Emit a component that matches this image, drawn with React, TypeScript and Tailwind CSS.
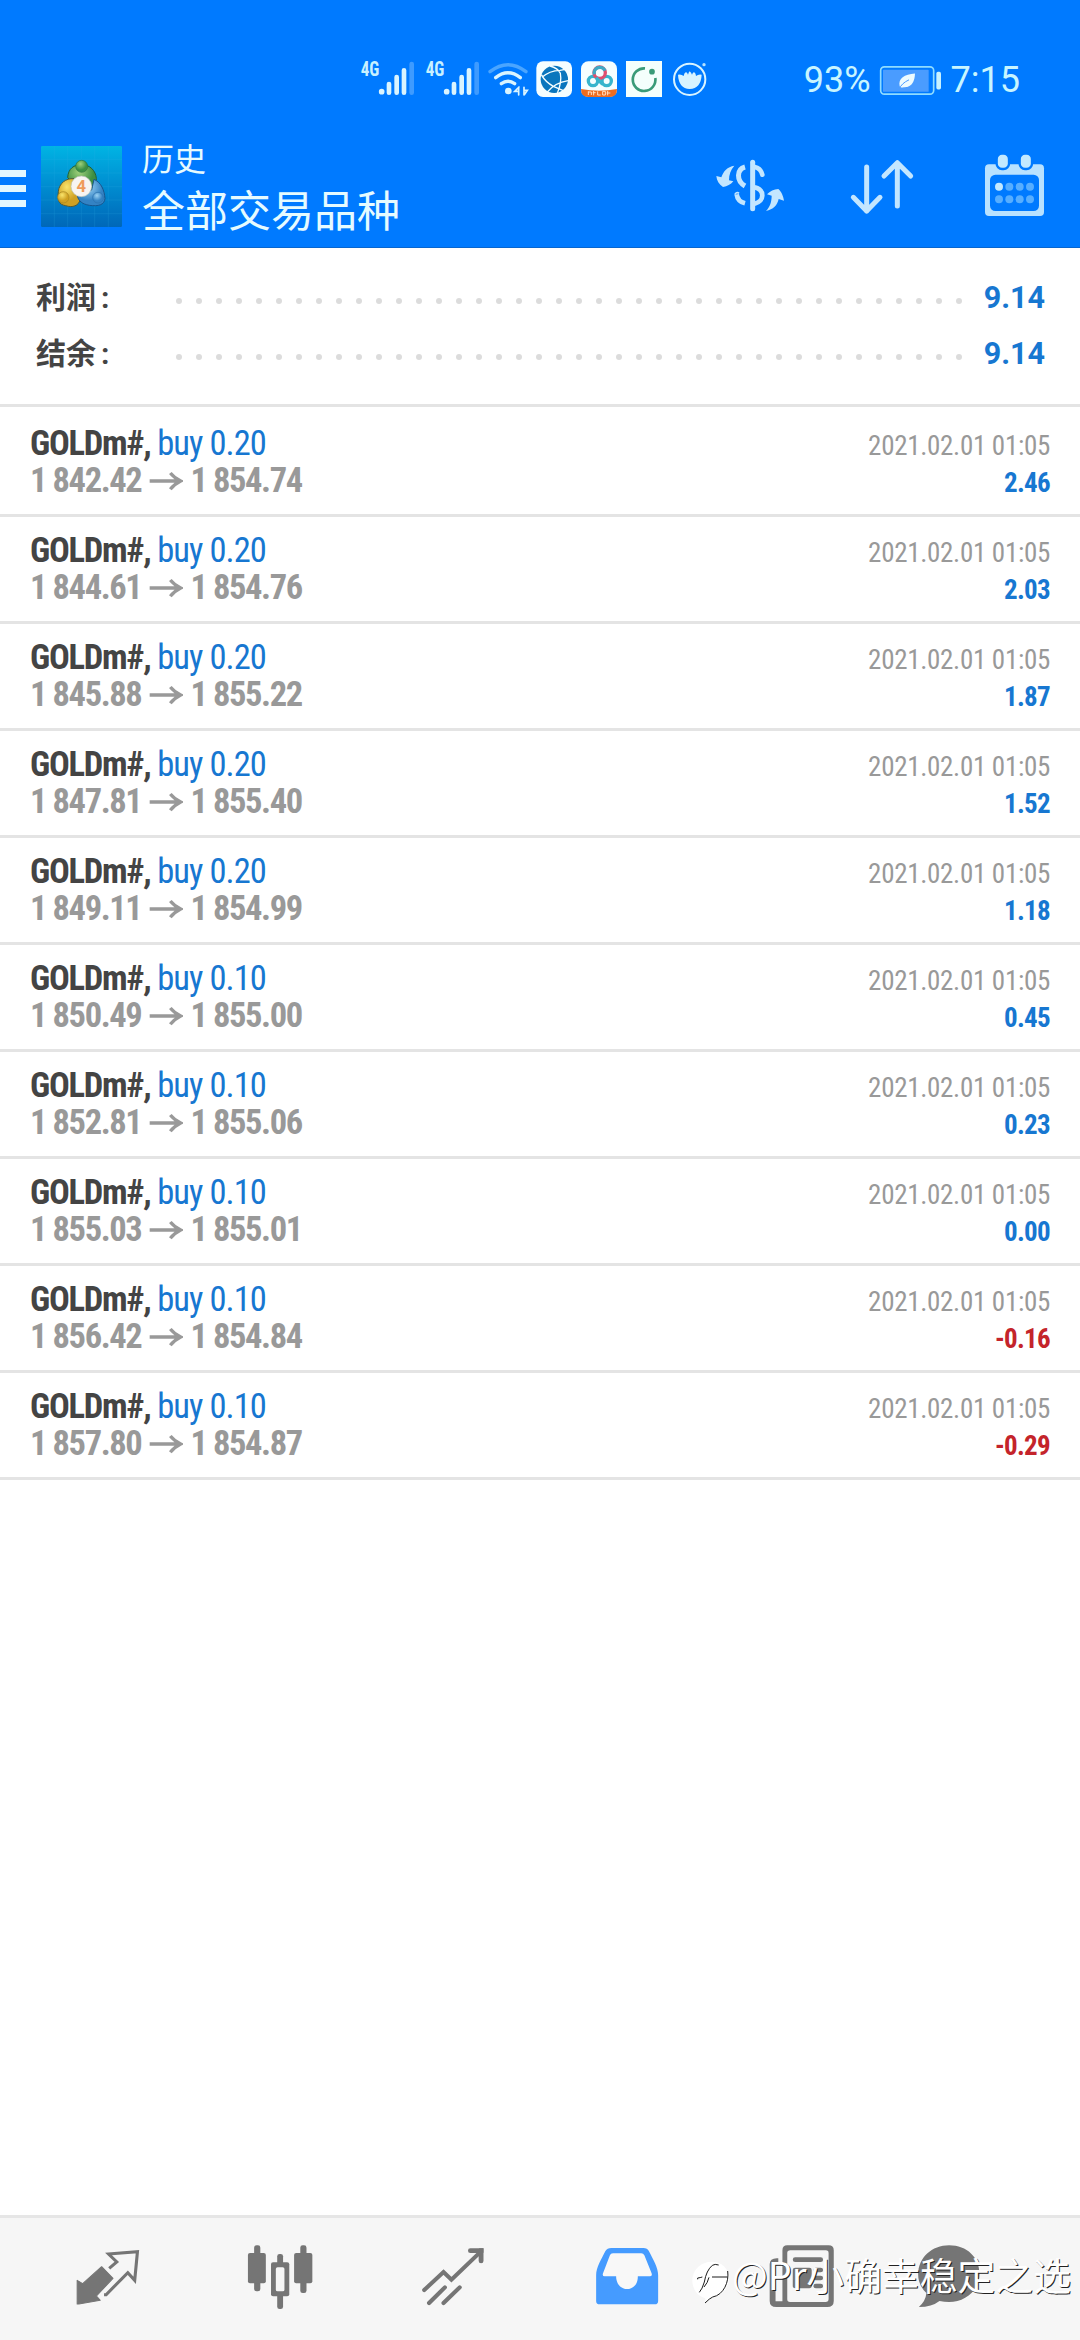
const deals = [
  { volume: '0.20', open: '1 842.42', close: '1 854.74', profit: '2.46' },
  { volume: '0.20', open: '1 844.61', close: '1 854.76', profit: '2.03' },
  { volume: '0.20', open: '1 845.88', close: '1 855.22', profit: '1.87' },
  { volume: '0.20', open: '1 847.81', close: '1 855.40', profit: '1.52' },
  { volume: '0.20', open: '1 849.11', close: '1 854.99', profit: '1.18' },
  { volume: '0.10', open: '1 850.49', close: '1 855.00', profit: '0.45' },
  { volume: '0.10', open: '1 852.81', close: '1 855.06', profit: '0.23' },
  { volume: '0.10', open: '1 855.03', close: '1 855.01', profit: '0.00' },
  { volume: '0.10', open: '1 856.42', close: '1 854.84', profit: '-0.16' },
  { volume: '0.10', open: '1 857.80', close: '1 854.87', profit: '-0.29' },
];

const summary = [
  { label: '利润', value: '9.14' },
  { label: '结余', value: '9.14' },
];

const Signal = () => (
  <svg viewBox="60 48 165 132" className="h-[44px] w-[55px]" strokeWidth="14" strokeLinecap="round">
    <text x="62" y="109" fill="#c8f1ff" fontSize="60" fontWeight="700" textLength="56" lengthAdjust="spacingAndGlyphs" className="font-['Roboto_Condensed',Roboto,sans-serif]">4G</text>
    <circle cx="125" cy="155" r="8.5" fill="#d9f4ff" />
    <g stroke="#d9f4ff">
      <path d="M147 132V158M170 111V158M192 91V158" />
    </g>
    <path d="M215 72V158" stroke="#3e9bff" />
  </svg>
);

const Wifi = () => (
  <svg viewBox="444 48 126 132" className="ml-2 h-[44px] w-[42px]" fill="none" strokeLinecap="round" strokeWidth="10">
    <path d="M450 95Q504 53 558 95" stroke="#4aa5ff" />
    <path d="M467 113Q504 84 541 113M484 131Q504 116 524 131" stroke="#d9f4ff" />
    <circle cx="505" cy="153" r="10" fill="#d9f4ff" />
    <path d="M536 142V165M537 141L524 154H536M552 142V165M553 164L562 151H552" stroke="#d9f4ff" strokeWidth="5" />
  </svg>
);

const Globe = () => (
  <svg viewBox="585 48 117 132" className="ml-[5px] h-[44px] w-[39px]">
    <rect x="589" y="64" width="107" height="107" rx="20" fill="#f5feff" />
    <circle cx="643" cy="118" r="41" fill="#0a76bd" />
    <path d="M606 112Q628 92 660 91L676 88M604 104Q616 126 640 139L670 152M630 78Q654 84 661 100Q666 125 652 160M622 156Q645 128 684 122" fill="none" stroke="#f5feff" strokeWidth="4" />
  </svg>
);

const Cloud = () => (
  <svg viewBox="720 48 117 132" className="ml-1.5 h-[44px] w-[39px]">
    <rect x="723" y="64" width="108" height="107" rx="22" fill="#f5feff" />
    <g fill="none" strokeWidth="10">
      <circle cx="759" cy="123" r="14" stroke="#37b4cc" />
      <circle cx="800" cy="123" r="14" stroke="#37b4cc" />
      <circle cx="779" cy="98" r="17" stroke="#e0506f" />
      <path d="M763 103A17 17 0 0 1 795 92" stroke="#3fa9c4" />
      <path d="M768 113L788 133" stroke="#37b4cc" />
    </g>
    <path d="M723 147Q777 158 831 147Q831 171 809 171H745Q723 171 723 147Z" fill="#ee6c1f" />
    <path d="M745 154V165M745 156H754V165M761 153V166M758 158H767M773 154V165H782M788 154H796V165H788ZM803 153V166M800 159H811" stroke="#ffe0c4" strokeWidth="3" fill="none" />
  </svg>
);

const Ring = () => (
  <svg viewBox="855 48 117 132" className="ml-1.5 h-[44px] w-[39px]">
    <rect x="858" y="63" width="108" height="108" fill="#f4fffc" />
    <path d="M915 85A34 34 0 1 0 946 114" fill="none" stroke="#3a9b78" strokeWidth="8" />
    <circle cx="936" cy="95" r="8.5" fill="#3a9b78" />
  </svg>
);

const Lotus = () => (
  <svg viewBox="993 48 114 132" className="ml-[7px] h-[44px] w-[38px]">
    <circle cx="1049" cy="118" r="47" fill="none" stroke="#d9f4ff" strokeWidth="6" />
    <circle cx="1092" cy="74" r="5" fill="#b5e2ff" />
    <path d="M1014 104Q1024 102 1031 108Q1032 99 1038 96Q1043 100 1044 104Q1046 97 1049 94Q1054 98 1056 104Q1057 99 1062 96Q1068 101 1068 108Q1075 102 1085 104Q1083 145 1049 147Q1016 145 1014 104Z" fill="#d9f4ff" />
  </svg>
);

const Battery = () => (
  <svg viewBox="296 60 192 116" className="h-[39px] w-[64px]">
    <rect x="301" y="77" width="159" height="82" rx="11" fill="none" stroke="#8fdcff" strokeWidth="5" />
    <rect x="308" y="86" width="137" height="66" rx="2" fill="#4a9cff" />
    <path d="M404 97C372 99 353 112 358 135L362 139C376 138 402 142 404 97Z" fill="#edfbff" />
    <path d="M356 144Q364 126 386 116" fill="none" stroke="#4a9cff" strokeWidth="3" />
    <rect x="468" y="92" width="14" height="53" rx="5" fill="#c8f1ff" />
  </svg>
);

const AppLogo = () => (
  <svg viewBox="123 78 243 243" className="ml-[15px] h-[81px] w-[81px]">
    <defs>
      <linearGradient id="sky" x1="0" y1="0" x2="0" y2="1">
        <stop offset="0" stopColor="#00b4e4" />
        <stop offset="0.5" stopColor="#008cd0" />
        <stop offset="1" stopColor="#0067b8" />
      </linearGradient>
      <radialGradient id="green" cx="0.4" cy="0.3"><stop offset="0" stopColor="#9fd07a" /><stop offset="1" stopColor="#3d8f42" /></radialGradient>
      <radialGradient id="yellow" cx="0.4" cy="0.3"><stop offset="0" stopColor="#f9e46c" /><stop offset="1" stopColor="#cfa021" /></radialGradient>
      <radialGradient id="blue" cx="0.4" cy="0.3"><stop offset="0" stopColor="#9bd2f3" /><stop offset="1" stopColor="#3483c4" /></radialGradient>
    </defs>
    <rect x="123" y="78" width="243" height="243" rx="4" fill="url(#sky)" />
    <path d="M163 78V321M203 78V321M244 78V321M284 78V321M325 78V321M123 118H366M123 159H366M123 200H366M123 240H366M123 281H366" stroke="#33b1e6" strokeWidth="1.5" opacity="0.35" />
    <path d="M203 172C205 145 222 134 245 134C270 134 287 152 289 175C290 190 282 205 272 210L216 190Z" fill="url(#green)" stroke="#245f34" strokeWidth="3" />
    <path d="M222 176C198 174 177 190 175 215C172 240 176 254 197 257C218 264 236 257 240 240Z" fill="url(#yellow)" stroke="#4d5a3a" strokeWidth="3" />
    <path d="M282 178C304 188 313 210 315 236C313 254 296 260 268 256C246 252 236 243 232 228L275 210Z" fill="url(#blue)" stroke="#17558c" strokeWidth="3" />
    <circle cx="245" cy="139" r="18" fill="url(#green)" stroke="#2f7440" strokeWidth="2" />
    <circle cx="190" cy="232" r="17" fill="url(#yellow)" stroke="#a58420" strokeWidth="2" />
    <circle cx="294" cy="233" r="16" fill="url(#blue)" stroke="#2a71ad" strokeWidth="2" />
    <circle cx="244" cy="199" r="31" fill="#f7f4f1" stroke="#b9c4b9" strokeWidth="2" />
    <text x="244" y="217" textAnchor="middle" fontSize="50" fontWeight="700" fill="#ef9a5a" className="font-[Roboto,sans-serif]">4</text>
  </svg>
);

const CurrencyIcon = () => (
  <svg viewBox="72 66 216 204" className="h-[68px] w-[72px]" fill="none" stroke="#c3e6ff">
    <path d="M133 107C112 110 100 124 94 142L79 138C80 152 87 163 99 171C112 169 122 164 130 154L117 151C117 134 122 120 133 107Z" fill="#c3e6ff" stroke="none" />
    <path d="M228 243C250 238 262 226 266 207L282 212C280 199 274 184 265 177C252 178 240 183 231 193L245 197C245 215 240 231 228 243Z" fill="#c3e6ff" stroke="none" />
    <path d="M188 97V236" strokeWidth="15" strokeLinecap="round" />
    <path d="M165 111C140 118 138 152 165 168" strokeWidth="15" />
    <path d="M140 193C142 208 150 216 165 220" strokeWidth="14" />
    <path d="M135 194A7 7 0 0 1 147 190" strokeWidth="5" />
    <path d="M194 111C207 114 214 121 217 134" strokeWidth="14" strokeLinecap="round" />
    <path d="M194 172C225 180 224 214 194 221" strokeWidth="14" />
  </svg>
);

const SortIcon = () => (
  <svg viewBox="474 66 204 204" className="ml-[62px] h-[68px] w-[68px]" fill="none" stroke="#c3e6ff" strokeWidth="15" strokeLinecap="round" strokeLinejoin="round">
    <path d="M530 111V243M490 202L530 243L570 202M622 228V98M582 138L622 98L662 138" />
  </svg>
);

const CalendarIcon = () => (
  <svg viewBox="876 66 198 204" className="ml-[66px] h-[68px] w-[66px]">
    <rect x="885" y="103" width="177" height="155" rx="12" fill="#b9e2ff" />
    <rect x="900" y="134" width="147" height="109" rx="16" fill="#007aff" />
    <g fill="#c3e9ff" stroke="#007aff" strokeWidth="7">
      <rect x="920" y="71" width="37" height="46" rx="16" />
      <rect x="989" y="71" width="37" height="46" rx="16" />
    </g>
    <circle cx="927" cy="170" r="12" fill="#c3e9ff" />
    <g fill="#57aeff">
      <circle cx="958" cy="170" r="12" />
      <circle cx="989" cy="170" r="12" />
      <circle cx="1020" cy="170" r="12" />
      <circle cx="927" cy="208" r="12" />
      <circle cx="958" cy="208" r="12" />
      <circle cx="989" cy="208" r="12" />
      <circle cx="1020" cy="208" r="12" />
    </g>
  </svg>
);

const PriceArrow = () => (
  <svg viewBox="450 655 102 66" className="mr-[7px] ml-[8px] h-[22px] w-[34px]" fill="none" stroke="#999" strokeWidth="10">
    <path d="M452 688H545M514 664Q525 678 545 688Q525 698 514 713" />
  </svg>
);

const StatusBar = () => (
  <div className="flex h-[134px] items-start pt-[56px] pl-[360px]">
    <Signal />
    <div className="ml-[10px]"><Signal /></div>
    <Wifi />
    <Globe />
    <Cloud />
    <Ring />
    <Lotus />
    <div className="ml-auto flex items-center pt-[2px] pr-[60px] font-[Roboto,sans-serif] text-[36px] leading-[44px] text-[#c8f5ff]">
      <span className="mr-[8px]">93%</span>
      <Battery />
      <span className="ml-[8px]">7:15</span>
    </div>
  </div>
);

const Header = () => (
  <header className="h-[248px] border-b border-[#0866cf] bg-[#007aff]">
    <StatusBar />
    <div className="flex items-start">
      <div className="mt-[36px] flex w-[26px] flex-col gap-2">
        <span className="h-[7px] bg-[#e3f7ff]" />
        <span className="h-[7px] bg-[#e3f7ff]" />
        <span className="h-[7px] bg-[#e3f7ff]" />
      </div>
      <div className="mt-[12px]"><AppLogo /></div>
      <div className="ml-[20px] font-['Noto_Sans_CJK_SC',sans-serif] text-[#e6fbff]">
        <p className="mt-[1px] text-[32px] leading-[44px]">历史</p>
        <p className="text-[43px] leading-[58px]">全部交易品种</p>
      </div>
      <div className="mt-[18px] mr-[32px] ml-auto flex">
        <CurrencyIcon />
        <SortIcon />
        <CalendarIcon />
      </div>
    </div>
  </header>
);

const Summary = () => (
  <section className="h-[159px] border-b-[3px] border-[#e4e4e4] pt-[21px]">
    {summary.map((item) => (
      <div key={item.label} className="flex h-[56px] items-center pr-[35px] pl-[36px] font-['Roboto','Noto_Sans_CJK_SC',sans-serif] text-[30px] font-bold">
        <span className="w-[140px] text-[#444]">{item.label}<span className="ml-[5px]">:</span></span>
        <span className="mt-[8px] flex gap-[14px]">
          {Array.from({ length: 40 }, (_, i) => (
            <i key={i} className="size-[6px] rounded-full bg-[#dcdcdc]" />
          ))}
        </span>
        <span className="mt-[2px] ml-auto text-[30.5px] text-[#1777d1]">{item.value}</span>
      </div>
    ))}
  </section>
);

const DealList = () => (
  <ul className="pt-[3px] font-['Roboto_Condensed','Roboto',sans-serif] text-[34.5px] leading-[37px] [font-stretch:75%]">
    {deals.map((deal) => (
      <li key={deal.open} className="h-[107px] border-b-[3px] border-[#e4e4e4] px-[30px] pt-[15px]">
        <div className="flex h-[37px] items-baseline justify-between">
          <p className="font-bold tracking-[-1.25px] text-[#444]">
            GOLDm#, <span className="font-normal tracking-[-0.95px] text-[#1777d1]">buy {deal.volume}</span>
          </p>
          <span className="text-[27px] tracking-[-0.3px] text-[#999]">2021.02.01 01:05</span>
        </div>
        <div className="flex h-[37px] items-baseline justify-between font-bold">
          <p className="flex items-center tracking-[-1.4px] text-[#999]">
            {deal.open}
            <PriceArrow />
            {deal.close}
          </p>
          <span className={deal.profit.startsWith('-') ? 'text-[27px] tracking-[-0.7px] text-[#c4242b]' : 'text-[27px] tracking-[-0.7px] text-[#1777d1]'}>{deal.profit}</span>
        </div>
      </li>
    ))}
  </ul>
);

const TabBar = () => (
  <nav className="relative mt-auto flex h-[125px] gap-[101px] border-t-[3px] border-[#e6e6e6] bg-[#f6f6f6] pt-[25px] pl-[72px]">
    {/* quotes */}
    <svg viewBox="209 128 209 209" preserveAspectRatio="none" className="h-[69.7px] w-[72px]" strokeLinejoin="round">
      <path d="M224 240L240 250L295 199L328 234L280 287L291 300L229 311H224Z" fill="#757575" stroke="#757575" strokeWidth="3" />
      <path d="M317 204L339 185L315 161L399 154L391 240L371 217L308 283H302" fill="none" stroke="#757575" strokeWidth="9" strokeLinejoin="miter" />
    </svg>
    {/* charts */}
    <svg viewBox="711.5 128 209 209" preserveAspectRatio="none" className="h-[69.7px] w-[72px]" fill="#757575">
      <rect x="738" y="135" width="18" height="138" rx="7" />
      <rect x="720" y="158" width="52" height="91" rx="6" />
      <rect x="872" y="135" width="18" height="143" rx="7" />
      <rect x="854" y="158" width="53" height="91" rx="6" />
      <rect x="805" y="161" width="17" height="165" rx="7" />
      <rect x="787" y="186" width="53" height="102" rx="6" />
      <rect x="801" y="201" width="25" height="72" rx="5" fill="#f6f6f6" />
    </svg>
    {/* trade */}
    <svg viewBox="1213.9 128 209 209" preserveAspectRatio="none" className="h-[69.7px] w-[72px]" fill="none" stroke="#757575" strokeWidth="12">
      <path d="M1232 269L1288 215L1311 238L1396 154M1246 308L1292 261M1288 308L1335 261" strokeLinecap="round" />
      <path d="M1366 151H1397V182" strokeWidth="14" strokeLinecap="round" />
      <path d="M1390 144H1404V158" fill="#757575" stroke="none" />
    </svg>
    {/* history */}
    <svg viewBox="148.1 128 209 209" preserveAspectRatio="none" className="h-[69.7px] w-[72px]">
      <path d="M207 143H300Q312 143 316 152C328 177 343 200 343 225V302Q343 312 333 312H173Q163 312 163 302V225C163 200 178 177 190 152Q195 143 207 143Z" fill="#459bff" />
      <path d="M212 159H294Q300 159 303 165L324 219Q327 228 318 228H284C285 279 221 279 221 228H188Q180 228 183 219L203 165Q205 159 212 159Z" fill="#f8f8f8" />
    </svg>
    {/* news */}
    <svg viewBox="650.5 128 209 209" preserveAspectRatio="none" className="h-[69.7px] w-[72px]">
      <path d="M692 174V300M692 174Q667 172 667 192V302Q667 320 686 320H834Q853 320 853 302V150Q853 135 838 135H718Q704 135 704 150V303H684V192Q684 188 692 186Z" fill="#757575" />
      <path d="M727 150H830Q838 150 838 158V296Q838 305 829 305H726Q718 305 718 297V158Q718 150 727 150Z" fill="#f6f6f6" />
      <path d="M741 178H815M801 209H815M801 233H815M801 257H815" stroke="#757575" strokeWidth="14" strokeLinecap="round" />
      <rect x="734" y="202" width="55" height="62" rx="7" fill="#757575" />
    </svg>
    {/* messages */}
    <svg viewBox="1086 128 209 209" preserveAspectRatio="none" className="-ml-[23px] h-[69.7px] w-[72px]">
      <path d="M1188 135C1240 135 1276 172 1276 220C1276 273 1232 305 1188 305Q1174 305 1160 302Q1138 320 1100 320Q1120 302 1122 278Q1098 255 1098 222C1098 172 1138 135 1188 135Z" fill="#757575" />
    </svg>
    <div className="absolute top-[32px] left-[691px] flex items-start">
      <svg viewBox="332 140 123 141" className="mt-[7px] h-[47px] w-[41px]">
        <path d="M395 154C425 154 446 176 446 203C446 232 426 256 398 260L377 276L374 263C350 256 336 236 336 210C336 178 362 154 395 154Z" fill="#fff" />
        <path d="M442 182C447 214 430 254 397 260Q388 264 374 278M395 200H441M352 207V203Q360 202 366 200M357 246Q366 236 372 215Q378 180 396 165Q404 160 415 164M386 201Q382 218 371 230" fill="none" stroke="#1c1c1c" strokeWidth="3" />
      </svg>
      <span className="font-['Noto_Sans_CJK_SC',sans-serif] text-[37.8px] leading-[48px] whitespace-nowrap text-white [text-shadow:1px_1px_0_#222]">@Pr小确幸稳定之选</span>
    </div>
  </nav>
);

export default function App() {
  return (
    <div className="flex h-[2340px] w-[1080px] flex-col overflow-hidden bg-white">
      <Header />
      <Summary />
      <DealList />
      <TabBar />
    </div>
  );
}
